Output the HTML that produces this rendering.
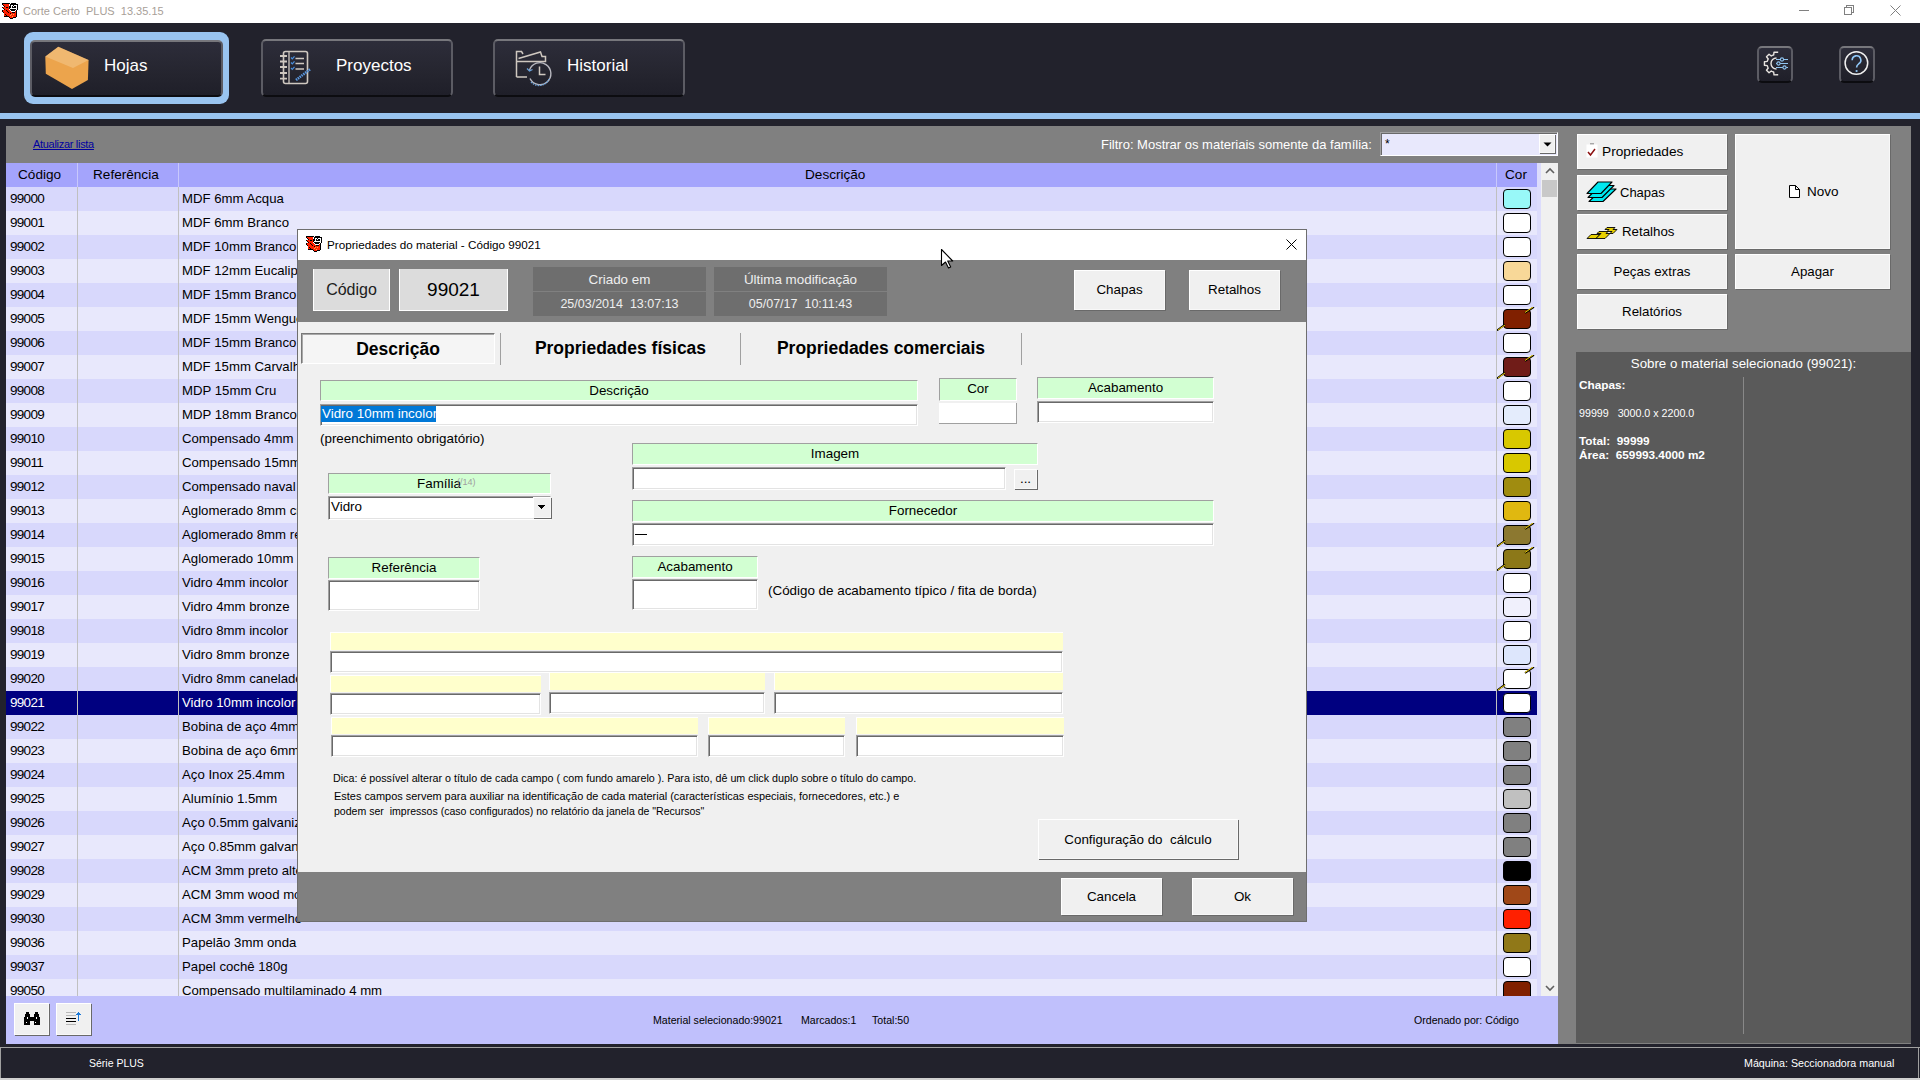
<!DOCTYPE html>
<html><head><meta charset="utf-8"><title>Corte Certo PLUS</title>
<style>
*{margin:0;padding:0;box-sizing:border-box}
html,body{width:1920px;height:1080px;overflow:hidden;background:#22222c;font-family:"Liberation Sans", sans-serif;}
div{position:absolute}
.t{white-space:pre;color:#000}
.btn{background:#f0f0f0;border-top:1px solid #fff;border-left:1px solid #fff;border-right:1px solid #f8f8f8;border-bottom:1px solid #f8f8f8;box-shadow:1px 1px 0 #696969,inset 1px 1px 0 #f0f0f0}
.hb{background:linear-gradient(#2d2d3a,#25252f 60%,#1f1f29);border-top:2px solid #77777c;border-left:2px solid #5c5c64;border-right:2px solid #5c5c64;border-bottom:2px solid #0c0c10;border-radius:5px}
.gl{background:#d2ffd2;border-top:1px solid #a0a0a0;border-left:1px solid #a0a0a0;border-bottom:1px solid #fff;border-right:1px solid #fff}
.yl{background:#ffffcc;border-top:1px solid #fff;border-left:1px solid #fff}
.inp{background:#fff;border-top:1px solid #a0a0a0;border-left:1px solid #a0a0a0;border-right:1px solid #fff;border-bottom:1px solid #fff;box-shadow:inset 1px 1px 0 #696969,inset -1px -1px 0 #e3e3e3}
</style></head>
<body>
<div style="left:0px;top:0px;width:1920px;height:23px;background:#fff"></div><div class="t" style="left:23px;top:0px;height:23px;line-height:23px;font-size:11px;color:#a8a098">Corte Certo  PLUS  13.35.15</div><div style="left:1799px;top:10px;width:10px;height:1px;background:#808080"></div><div style="left:1846px;top:5px;width:8px;height:8px;border:1px solid #808080"></div><div style="left:1844px;top:7px;width:8px;height:8px;border:1px solid #808080;background:#fff"></div><svg style="position:absolute;left:1890px;top:5px" width="11" height="11"><path d="M0.5 0.5L10.5 10.5M10.5 0.5L0.5 10.5" stroke="#808080" stroke-width="1"/></svg><div style="left:0px;top:23px;width:1920px;height:90px;background:#22222c"></div><div style="left:0px;top:113px;width:1920px;height:6px;background:#99c4f0"></div><div style="left:0px;top:119px;width:1920px;height:7px;background:#22222c"></div><div style="left:24px;top:32px;width:205px;height:72px;background:#99c4f0;border-radius:9px"></div><div class="hb" style="left:30px;top:40px;width:193px;height:57px;"></div><div class="t" style="left:104px;top:54px;height:24px;line-height:24px;font-size:17px;color:#fff">Hojas</div><div class="hb" style="left:261px;top:39px;width:192px;height:58px;"></div><div class="t" style="left:336px;top:54px;height:24px;line-height:24px;font-size:17px;color:#fff">Proyectos</div><div class="hb" style="left:493px;top:39px;width:192px;height:58px;"></div><div class="t" style="left:567px;top:54px;height:24px;line-height:24px;font-size:17px;color:#fff">Historial</div><div class="hb" style="left:1757px;top:46px;width:36px;height:37px;"></div><div class="hb" style="left:1839px;top:46px;width:36px;height:37px;"></div><div style="left:6px;top:126px;width:1552px;height:918px;background:#808080"></div><div class="t" style="left:33px;top:136px;height:16px;line-height:16px;font-size:11px;letter-spacing:-0.3px;color:#0000a0;text-decoration:underline">Atualizar lista</div><div class="t" style="left:1101px;top:137px;height:16px;line-height:16px;font-size:13px;color:#fff">Filtro: Mostrar os materiais somente da família:</div><div style="left:1380px;top:132px;width:178px;height:24px;background:#e8e8fc;border-top:1px solid #a0a0a0;border-left:1px solid #a0a0a0;border-bottom:1px solid #fff;border-right:1px solid #fff;box-shadow:inset 1px 1px 0 #696969"></div><div class="t" style="left:1385px;top:137px;height:14px;line-height:14px;font-size:12px">*</div><div class="btn" style="left:1539px;top:134px;width:16px;height:19px;"></div><div style="left:6px;top:163px;width:1531px;height:24px;background:#a4a4fc"></div><div style="left:77px;top:163px;width:1px;height:24px;background:#c8c8fc"></div><div style="left:178px;top:163px;width:1px;height:24px;background:#c8c8fc"></div><div style="left:1496px;top:163px;width:1px;height:24px;background:#c8c8fc"></div><div class="t" style="left:18px;top:163px;height:24px;line-height:24px;font-size:13.6px">Código</div><div class="t" style="left:93px;top:163px;height:24px;line-height:24px;font-size:13.6px">Referência</div><div class="t" style="left:805px;top:163px;height:24px;line-height:24px;font-size:13.6px">Descrição</div><div class="t" style="left:1505px;top:163px;height:24px;line-height:24px;font-size:13.6px">Cor</div><div style="left:6px;top:187px;width:1531px;height:809px;overflow:hidden"><div style="left:0px;top:0px;width:1531px;height:24px;background:#d8d8fc"></div><div class="t" style="left:4px;top:0px;height:24px;line-height:24px;font-size:13.5px;letter-spacing:-0.7px;color:#000">99000</div><div class="t" style="left:176px;top:0px;height:24px;line-height:24px;font-size:13.2px;color:#000">MDF 6mm Acqua</div><div style="left:1497px;top:2px;width:28px;height:20px;background:#98f8f8;border:1.5px solid #000;border-radius:4px"></div><div style="left:0px;top:24px;width:1531px;height:24px;background:#e8e8fc"></div><div class="t" style="left:4px;top:24px;height:24px;line-height:24px;font-size:13.5px;letter-spacing:-0.7px;color:#000">99001</div><div class="t" style="left:176px;top:24px;height:24px;line-height:24px;font-size:13.2px;color:#000">MDF 6mm Branco</div><div style="left:1497px;top:26px;width:28px;height:20px;background:#fff;border:1.5px solid #000;border-radius:4px"></div><div style="left:0px;top:48px;width:1531px;height:24px;background:#d8d8fc"></div><div class="t" style="left:4px;top:48px;height:24px;line-height:24px;font-size:13.5px;letter-spacing:-0.7px;color:#000">99002</div><div class="t" style="left:176px;top:48px;height:24px;line-height:24px;font-size:13.2px;color:#000">MDF 10mm Branco</div><div style="left:1497px;top:50px;width:28px;height:20px;background:#fff;border:1.5px solid #000;border-radius:4px"></div><div style="left:0px;top:72px;width:1531px;height:24px;background:#e8e8fc"></div><div class="t" style="left:4px;top:72px;height:24px;line-height:24px;font-size:13.5px;letter-spacing:-0.7px;color:#000">99003</div><div class="t" style="left:176px;top:72px;height:24px;line-height:24px;font-size:13.2px;color:#000">MDF 12mm Eucalipto</div><div style="left:1497px;top:74px;width:28px;height:20px;background:#f8d898;border:1.5px solid #000;border-radius:4px"></div><div style="left:0px;top:96px;width:1531px;height:24px;background:#d8d8fc"></div><div class="t" style="left:4px;top:96px;height:24px;line-height:24px;font-size:13.5px;letter-spacing:-0.7px;color:#000">99004</div><div class="t" style="left:176px;top:96px;height:24px;line-height:24px;font-size:13.2px;color:#000">MDF 15mm Branco</div><div style="left:1497px;top:98px;width:28px;height:20px;background:#fff;border:1.5px solid #000;border-radius:4px"></div><div style="left:0px;top:120px;width:1531px;height:24px;background:#e8e8fc"></div><div class="t" style="left:4px;top:120px;height:24px;line-height:24px;font-size:13.5px;letter-spacing:-0.7px;color:#000">99005</div><div class="t" style="left:176px;top:120px;height:24px;line-height:24px;font-size:13.2px;color:#000">MDF 15mm Wengue</div><div style="left:1497px;top:122px;width:28px;height:20px;background:#802000;border:1.5px solid #000;border-radius:4px"></div><svg style="position:absolute;left:1490px;top:120px" width="41" height="24"><path d="M1 23.5l8-6M29 6l9-6" stroke="#000" stroke-width="1.6"/><path d="M2 23l7-5M29 5.5l8-5.5" stroke="#f0d000" stroke-width="1"/></svg><div style="left:0px;top:144px;width:1531px;height:24px;background:#d8d8fc"></div><div class="t" style="left:4px;top:144px;height:24px;line-height:24px;font-size:13.5px;letter-spacing:-0.7px;color:#000">99006</div><div class="t" style="left:176px;top:144px;height:24px;line-height:24px;font-size:13.2px;color:#000">MDF 15mm Branco</div><div style="left:1497px;top:146px;width:28px;height:20px;background:#fff;border:1.5px solid #000;border-radius:4px"></div><div style="left:0px;top:168px;width:1531px;height:24px;background:#e8e8fc"></div><div class="t" style="left:4px;top:168px;height:24px;line-height:24px;font-size:13.5px;letter-spacing:-0.7px;color:#000">99007</div><div class="t" style="left:176px;top:168px;height:24px;line-height:24px;font-size:13.2px;color:#000">MDF 15mm Carvalho</div><div style="left:1497px;top:170px;width:28px;height:20px;background:#701c18;border:1.5px solid #000;border-radius:4px"></div><svg style="position:absolute;left:1490px;top:168px" width="41" height="24"><path d="M1 23.5l8-6M29 6l9-6" stroke="#000" stroke-width="1.6"/><path d="M2 23l7-5M29 5.5l8-5.5" stroke="#f0d000" stroke-width="1"/></svg><div style="left:0px;top:192px;width:1531px;height:24px;background:#d8d8fc"></div><div class="t" style="left:4px;top:192px;height:24px;line-height:24px;font-size:13.5px;letter-spacing:-0.7px;color:#000">99008</div><div class="t" style="left:176px;top:192px;height:24px;line-height:24px;font-size:13.2px;color:#000">MDP 15mm Cru</div><div style="left:1497px;top:194px;width:28px;height:20px;background:#fff;border:1.5px solid #000;border-radius:4px"></div><div style="left:0px;top:216px;width:1531px;height:24px;background:#e8e8fc"></div><div class="t" style="left:4px;top:216px;height:24px;line-height:24px;font-size:13.5px;letter-spacing:-0.7px;color:#000">99009</div><div class="t" style="left:176px;top:216px;height:24px;line-height:24px;font-size:13.2px;color:#000">MDP 18mm Branco</div><div style="left:1497px;top:218px;width:28px;height:20px;background:#e4ecfc;border:1.5px solid #000;border-radius:4px"></div><div style="left:0px;top:240px;width:1531px;height:24px;background:#d8d8fc"></div><div class="t" style="left:4px;top:240px;height:24px;line-height:24px;font-size:13.5px;letter-spacing:-0.7px;color:#000">99010</div><div class="t" style="left:176px;top:240px;height:24px;line-height:24px;font-size:13.2px;color:#000">Compensado 4mm</div><div style="left:1497px;top:242px;width:28px;height:20px;background:#d8c800;border:1.5px solid #000;border-radius:4px"></div><div style="left:0px;top:264px;width:1531px;height:24px;background:#e8e8fc"></div><div class="t" style="left:4px;top:264px;height:24px;line-height:24px;font-size:13.5px;letter-spacing:-0.7px;color:#000">99011</div><div class="t" style="left:176px;top:264px;height:24px;line-height:24px;font-size:13.2px;color:#000">Compensado 15mm</div><div style="left:1497px;top:266px;width:28px;height:20px;background:#d8c800;border:1.5px solid #000;border-radius:4px"></div><div style="left:0px;top:288px;width:1531px;height:24px;background:#d8d8fc"></div><div class="t" style="left:4px;top:288px;height:24px;line-height:24px;font-size:13.5px;letter-spacing:-0.7px;color:#000">99012</div><div class="t" style="left:176px;top:288px;height:24px;line-height:24px;font-size:13.2px;color:#000">Compensado naval</div><div style="left:1497px;top:290px;width:28px;height:20px;background:#a08c10;border:1.5px solid #000;border-radius:4px"></div><div style="left:0px;top:312px;width:1531px;height:24px;background:#e8e8fc"></div><div class="t" style="left:4px;top:312px;height:24px;line-height:24px;font-size:13.5px;letter-spacing:-0.7px;color:#000">99013</div><div class="t" style="left:176px;top:312px;height:24px;line-height:24px;font-size:13.2px;color:#000">Aglomerado 8mm cru</div><div style="left:1497px;top:314px;width:28px;height:20px;background:#e0b810;border:1.5px solid #000;border-radius:4px"></div><div style="left:0px;top:336px;width:1531px;height:24px;background:#d8d8fc"></div><div class="t" style="left:4px;top:336px;height:24px;line-height:24px;font-size:13.5px;letter-spacing:-0.7px;color:#000">99014</div><div class="t" style="left:176px;top:336px;height:24px;line-height:24px;font-size:13.2px;color:#000">Aglomerado 8mm revestido</div><div style="left:1497px;top:338px;width:28px;height:20px;background:#8c7830;border:1.5px solid #000;border-radius:4px"></div><svg style="position:absolute;left:1490px;top:336px" width="41" height="24"><path d="M1 23.5l8-6M29 6l9-6" stroke="#000" stroke-width="1.6"/><path d="M2 23l7-5M29 5.5l8-5.5" stroke="#f0d000" stroke-width="1"/></svg><div style="left:0px;top:360px;width:1531px;height:24px;background:#e8e8fc"></div><div class="t" style="left:4px;top:360px;height:24px;line-height:24px;font-size:13.5px;letter-spacing:-0.7px;color:#000">99015</div><div class="t" style="left:176px;top:360px;height:24px;line-height:24px;font-size:13.2px;color:#000">Aglomerado 10mm</div><div style="left:1497px;top:362px;width:28px;height:20px;background:#8c7818;border:1.5px solid #000;border-radius:4px"></div><svg style="position:absolute;left:1490px;top:360px" width="41" height="24"><path d="M1 23.5l8-6M29 6l9-6" stroke="#000" stroke-width="1.6"/><path d="M2 23l7-5M29 5.5l8-5.5" stroke="#f0d000" stroke-width="1"/></svg><div style="left:0px;top:384px;width:1531px;height:24px;background:#d8d8fc"></div><div class="t" style="left:4px;top:384px;height:24px;line-height:24px;font-size:13.5px;letter-spacing:-0.7px;color:#000">99016</div><div class="t" style="left:176px;top:384px;height:24px;line-height:24px;font-size:13.2px;color:#000">Vidro 4mm incolor</div><div style="left:1497px;top:386px;width:28px;height:20px;background:#fff;border:1.5px solid #000;border-radius:4px"></div><div style="left:0px;top:408px;width:1531px;height:24px;background:#e8e8fc"></div><div class="t" style="left:4px;top:408px;height:24px;line-height:24px;font-size:13.5px;letter-spacing:-0.7px;color:#000">99017</div><div class="t" style="left:176px;top:408px;height:24px;line-height:24px;font-size:13.2px;color:#000">Vidro 4mm bronze</div><div style="left:1497px;top:410px;width:28px;height:20px;background:#f0f0fc;border:1.5px solid #000;border-radius:4px"></div><div style="left:0px;top:432px;width:1531px;height:24px;background:#d8d8fc"></div><div class="t" style="left:4px;top:432px;height:24px;line-height:24px;font-size:13.5px;letter-spacing:-0.7px;color:#000">99018</div><div class="t" style="left:176px;top:432px;height:24px;line-height:24px;font-size:13.2px;color:#000">Vidro 8mm incolor</div><div style="left:1497px;top:434px;width:28px;height:20px;background:#fff;border:1.5px solid #000;border-radius:4px"></div><div style="left:0px;top:456px;width:1531px;height:24px;background:#e8e8fc"></div><div class="t" style="left:4px;top:456px;height:24px;line-height:24px;font-size:13.5px;letter-spacing:-0.7px;color:#000">99019</div><div class="t" style="left:176px;top:456px;height:24px;line-height:24px;font-size:13.2px;color:#000">Vidro 8mm bronze</div><div style="left:1497px;top:458px;width:28px;height:20px;background:#dde6fc;border:1.5px solid #000;border-radius:4px"></div><div style="left:0px;top:480px;width:1531px;height:24px;background:#d8d8fc"></div><div class="t" style="left:4px;top:480px;height:24px;line-height:24px;font-size:13.5px;letter-spacing:-0.7px;color:#000">99020</div><div class="t" style="left:176px;top:480px;height:24px;line-height:24px;font-size:13.2px;color:#000">Vidro 8mm canelado</div><div style="left:1497px;top:482px;width:28px;height:20px;background:#fff;border:1.5px solid #000;border-radius:4px"></div><svg style="position:absolute;left:1490px;top:480px" width="41" height="24"><path d="M1 23.5l8-6M29 6l9-6" stroke="#000" stroke-width="1.6"/><path d="M2 23l7-5M29 5.5l8-5.5" stroke="#f0d000" stroke-width="1"/></svg><div style="left:0px;top:504px;width:1531px;height:24px;background:#000080"></div><div class="t" style="left:4px;top:504px;height:24px;line-height:24px;font-size:13.5px;letter-spacing:-0.7px;color:#fff">99021</div><div class="t" style="left:176px;top:504px;height:24px;line-height:24px;font-size:13.2px;color:#fff">Vidro 10mm incolor</div><div style="left:1497px;top:506px;width:28px;height:20px;background:#fff;border:1.5px solid #000;border-radius:4px"></div><div style="left:0px;top:528px;width:1531px;height:24px;background:#d8d8fc"></div><div class="t" style="left:4px;top:528px;height:24px;line-height:24px;font-size:13.5px;letter-spacing:-0.7px;color:#000">99022</div><div class="t" style="left:176px;top:528px;height:24px;line-height:24px;font-size:13.2px;color:#000">Bobina de aço 4mm</div><div style="left:1497px;top:530px;width:28px;height:20px;background:#808080;border:1.5px solid #000;border-radius:4px"></div><div style="left:0px;top:552px;width:1531px;height:24px;background:#e8e8fc"></div><div class="t" style="left:4px;top:552px;height:24px;line-height:24px;font-size:13.5px;letter-spacing:-0.7px;color:#000">99023</div><div class="t" style="left:176px;top:552px;height:24px;line-height:24px;font-size:13.2px;color:#000">Bobina de aço 6mm</div><div style="left:1497px;top:554px;width:28px;height:20px;background:#808080;border:1.5px solid #000;border-radius:4px"></div><div style="left:0px;top:576px;width:1531px;height:24px;background:#d8d8fc"></div><div class="t" style="left:4px;top:576px;height:24px;line-height:24px;font-size:13.5px;letter-spacing:-0.7px;color:#000">99024</div><div class="t" style="left:176px;top:576px;height:24px;line-height:24px;font-size:13.2px;color:#000">Aço Inox 25.4mm</div><div style="left:1497px;top:578px;width:28px;height:20px;background:#808080;border:1.5px solid #000;border-radius:4px"></div><div style="left:0px;top:600px;width:1531px;height:24px;background:#e8e8fc"></div><div class="t" style="left:4px;top:600px;height:24px;line-height:24px;font-size:13.5px;letter-spacing:-0.7px;color:#000">99025</div><div class="t" style="left:176px;top:600px;height:24px;line-height:24px;font-size:13.2px;color:#000">Alumínio 1.5mm</div><div style="left:1497px;top:602px;width:28px;height:20px;background:#c0c0c0;border:1.5px solid #000;border-radius:4px"></div><div style="left:0px;top:624px;width:1531px;height:24px;background:#d8d8fc"></div><div class="t" style="left:4px;top:624px;height:24px;line-height:24px;font-size:13.5px;letter-spacing:-0.7px;color:#000">99026</div><div class="t" style="left:176px;top:624px;height:24px;line-height:24px;font-size:13.2px;color:#000">Aço 0.5mm galvanizado</div><div style="left:1497px;top:626px;width:28px;height:20px;background:#808080;border:1.5px solid #000;border-radius:4px"></div><div style="left:0px;top:648px;width:1531px;height:24px;background:#e8e8fc"></div><div class="t" style="left:4px;top:648px;height:24px;line-height:24px;font-size:13.5px;letter-spacing:-0.7px;color:#000">99027</div><div class="t" style="left:176px;top:648px;height:24px;line-height:24px;font-size:13.2px;color:#000">Aço 0.85mm galvanizado</div><div style="left:1497px;top:650px;width:28px;height:20px;background:#808080;border:1.5px solid #000;border-radius:4px"></div><div style="left:0px;top:672px;width:1531px;height:24px;background:#d8d8fc"></div><div class="t" style="left:4px;top:672px;height:24px;line-height:24px;font-size:13.5px;letter-spacing:-0.7px;color:#000">99028</div><div class="t" style="left:176px;top:672px;height:24px;line-height:24px;font-size:13.2px;color:#000">ACM 3mm preto alto brilho</div><div style="left:1497px;top:674px;width:28px;height:20px;background:#000;border:1.5px solid #000;border-radius:4px"></div><div style="left:0px;top:696px;width:1531px;height:24px;background:#e8e8fc"></div><div class="t" style="left:4px;top:696px;height:24px;line-height:24px;font-size:13.5px;letter-spacing:-0.7px;color:#000">99029</div><div class="t" style="left:176px;top:696px;height:24px;line-height:24px;font-size:13.2px;color:#000">ACM 3mm wood mogno</div><div style="left:1497px;top:698px;width:28px;height:20px;background:#a04818;border:1.5px solid #000;border-radius:4px"></div><div style="left:0px;top:720px;width:1531px;height:24px;background:#d8d8fc"></div><div class="t" style="left:4px;top:720px;height:24px;line-height:24px;font-size:13.5px;letter-spacing:-0.7px;color:#000">99030</div><div class="t" style="left:176px;top:720px;height:24px;line-height:24px;font-size:13.2px;color:#000">ACM 3mm vermelho</div><div style="left:1497px;top:722px;width:28px;height:20px;background:#ff2000;border:1.5px solid #000;border-radius:4px"></div><div style="left:0px;top:744px;width:1531px;height:24px;background:#e8e8fc"></div><div class="t" style="left:4px;top:744px;height:24px;line-height:24px;font-size:13.5px;letter-spacing:-0.7px;color:#000">99036</div><div class="t" style="left:176px;top:744px;height:24px;line-height:24px;font-size:13.2px;color:#000">Papelão 3mm onda</div><div style="left:1497px;top:746px;width:28px;height:20px;background:#907818;border:1.5px solid #000;border-radius:4px"></div><div style="left:0px;top:768px;width:1531px;height:24px;background:#d8d8fc"></div><div class="t" style="left:4px;top:768px;height:24px;line-height:24px;font-size:13.5px;letter-spacing:-0.7px;color:#000">99037</div><div class="t" style="left:176px;top:768px;height:24px;line-height:24px;font-size:13.2px;color:#000">Papel cochê 180g</div><div style="left:1497px;top:770px;width:28px;height:20px;background:#fff;border:1.5px solid #000;border-radius:4px"></div><div style="left:0px;top:792px;width:1531px;height:24px;background:#e8e8fc"></div><div class="t" style="left:4px;top:792px;height:24px;line-height:24px;font-size:13.5px;letter-spacing:-0.7px;color:#000">99050</div><div class="t" style="left:176px;top:792px;height:24px;line-height:24px;font-size:13.2px;color:#000">Compensado multilaminado 4 mm</div><div style="left:1497px;top:794px;width:28px;height:20px;background:#802000;border:1.5px solid #000;border-radius:4px"></div><div style="left:71px;top:0px;width:1px;height:809px;background:#c0c0c0"></div><div style="left:172px;top:0px;width:1px;height:809px;background:#c0c0c0"></div><div style="left:1490px;top:0px;width:1px;height:809px;background:#c0c0c0"></div></div><div style="left:1537px;top:163px;width:4px;height:833px;background:#dcdcfc"></div><div style="left:1541px;top:163px;width:17px;height:833px;background:#f0f0f0"></div><div style="left:1542px;top:180px;width:15px;height:17px;background:#c8c8c8"></div><div style="left:6px;top:996px;width:1552px;height:48px;background:#c0c0fc"></div><div class="btn" style="left:14px;top:1003px;width:35px;height:32px;"></div><div class="btn" style="left:56px;top:1003px;width:35px;height:32px;"></div><div class="t" style="left:653px;top:1012px;height:16px;line-height:16px;font-size:10.6px">Material selecionado:99021</div><div class="t" style="left:801px;top:1012px;height:16px;line-height:16px;font-size:10.6px">Marcados:1</div><div class="t" style="left:872px;top:1012px;height:16px;line-height:16px;font-size:10.6px">Total:50</div><div class="t" style="left:1414px;top:1012px;height:16px;line-height:16px;font-size:10.6px">Ordenado por: Código</div><div style="left:1558px;top:126px;width:353px;height:918px;background:#808080"></div><div class="btn" style="left:1577px;top:134px;width:150px;height:35px;"></div><div class="t" style="left:1602px;top:134px;height:35px;line-height:35px;font-size:13.7px">Propriedades</div><div class="btn" style="left:1577px;top:175px;width:150px;height:35px;"></div><div class="t" style="left:1620px;top:175px;height:35px;line-height:35px;font-size:13px">Chapas</div><div class="btn" style="left:1577px;top:214px;width:150px;height:35px;"></div><div class="t" style="left:1622px;top:214px;height:35px;line-height:35px;font-size:13.3px">Retalhos</div><div class="btn" style="left:1735px;top:134px;width:155px;height:115px;"></div><div class="t" style="left:1807px;top:134px;height:115px;line-height:115px;font-size:13.5px">Novo</div><svg style="position:absolute;left:1788px;top:184px" width="13" height="15"><path d="M1.5 1.5h6l4 4v8h-10z M7.5 1.5v4h4" fill="#fff" stroke="#000" stroke-width="1"/></svg><div class="btn" style="left:1577px;top:254px;width:150px;height:35px;"></div><div class="t" style="left:1577px;top:254px;width:150px;height:35px;line-height:35px;font-size:13.3px;text-align:center">Peças extras</div><div class="btn" style="left:1735px;top:254px;width:155px;height:35px;"></div><div class="t" style="left:1735px;top:254px;width:155px;height:35px;line-height:35px;font-size:13.3px;text-align:center">Apagar</div><div class="btn" style="left:1577px;top:294px;width:150px;height:35px;"></div><div class="t" style="left:1577px;top:294px;width:150px;height:35px;line-height:35px;font-size:13.3px;text-align:center">Relatórios</div><div style="left:1576px;top:352px;width:335px;height:691px;background:#5a5a5a"></div><div class="t" style="left:1576px;top:355px;width:335px;height:18px;line-height:18px;font-size:13.3px;color:#fff;text-align:center">Sobre o material selecionado (99021):</div><div style="left:1743px;top:377px;width:1px;height:657px;background:#888"></div><div class="t" style="left:1579px;top:378px;height:14px;line-height:14px;font-size:11.8px;font-weight:bold;color:#fff">Chapas:</div><div class="t" style="left:1579px;top:406px;height:14px;line-height:14px;font-size:10.7px;color:#fff">99999   3000.0 x 2200.0</div><div class="t" style="left:1579px;top:434px;height:14px;line-height:14px;font-size:11.8px;font-weight:bold;color:#fff">Total:  99999</div><div class="t" style="left:1579px;top:448px;height:14px;line-height:14px;font-size:11.8px;font-weight:bold;color:#fff">Área:  659993.4000 m2</div><div style="left:0px;top:1044px;width:1920px;height:36px;background:#22222c"></div><div style="left:0px;top:1047px;width:1920px;height:1px;background:#a0a0a0"></div><div style="left:0px;top:1078px;width:1920px;height:2px;background:#d0d0d0"></div><div style="left:0px;top:1047px;width:1px;height:31px;background:#a0a0a0"></div><div style="left:1918px;top:1047px;width:1px;height:31px;background:#a0a0a0"></div><div class="t" style="left:89px;top:1055px;height:16px;line-height:16px;font-size:10.5px;color:#fff">Série PLUS</div><div class="t" style="left:1744px;top:1055px;height:16px;line-height:16px;font-size:10.7px;color:#fff">Máquina: Seccionadora manual</div><div style="left:297px;top:229px;width:1010px;height:693px;background:#f0f0f0;border:1px solid #6e6e6e"></div><div style="left:298px;top:230px;width:1008px;height:30px;background:#fff"></div><div class="t" style="left:327px;top:230px;height:30px;line-height:30px;font-size:11.7px">Propriedades do material - Código 99021</div><svg style="position:absolute;left:1286px;top:239px" width="11" height="11"><path d="M0.5 0.5L10.5 10.5M10.5 0.5L0.5 10.5" stroke="#000" stroke-width="1"/></svg><div style="left:298px;top:260px;width:1008px;height:62px;background:#808080"></div><div style="left:313px;top:269px;width:77px;height:42px;background:#dcdcdc;border:1px solid #fff;border-top:none"></div><div class="t" style="left:313px;top:269px;width:77px;height:42px;line-height:42px;font-size:16px;color:#202020;text-align:center">Código</div><div style="left:399px;top:269px;width:109px;height:42px;background:#dcdcdc;border:1px solid #fff;border-top:none"></div><div class="t" style="left:399px;top:269px;width:109px;height:42px;line-height:42px;font-size:19px;color:#000;text-align:center">99021</div><div style="left:533px;top:267px;width:173px;height:24px;background:#6e6e6e"></div><div style="left:533px;top:292px;width:173px;height:24px;background:#6e6e6e"></div><div class="t" style="left:533px;top:268px;width:173px;height:24px;line-height:24px;font-size:13.4px;color:#eee;text-align:center">Criado em</div><div class="t" style="left:533px;top:292px;width:173px;height:24px;line-height:24px;font-size:12.5px;color:#eee;text-align:center">25/03/2014  13:07:13</div><div style="left:714px;top:267px;width:173px;height:24px;background:#6e6e6e"></div><div style="left:714px;top:292px;width:173px;height:24px;background:#6e6e6e"></div><div class="t" style="left:714px;top:268px;width:173px;height:24px;line-height:24px;font-size:13.4px;color:#eee;text-align:center">Última modificação</div><div class="t" style="left:714px;top:292px;width:173px;height:24px;line-height:24px;font-size:12.5px;color:#eee;text-align:center">05/07/17  10:11:43</div><div class="btn" style="left:1074px;top:270px;width:91px;height:40px;"></div><div class="t" style="left:1074px;top:270px;width:91px;height:40px;line-height:40px;font-size:13.4px;text-align:center">Chapas</div><div class="btn" style="left:1189px;top:270px;width:91px;height:40px;"></div><div class="t" style="left:1189px;top:270px;width:91px;height:40px;line-height:40px;font-size:13.4px;text-align:center">Retalhos</div><div style="left:301px;top:333px;width:194px;height:31px;background:#f5f5f5;border-top:1px solid #787878;border-left:1px solid #787878;border-right:1px solid #fff;border-bottom:1px solid #fff;box-shadow:inset 1px 1px 0 #a8a8a8"></div><div class="t" style="left:301px;top:333px;width:194px;height:32px;line-height:32px;font-size:17.5px;font-weight:bold;text-align:center">Descrição</div><div style="left:500px;top:333px;width:1px;height:32px;background:#a0a0a0"></div><div class="t" style="left:501px;top:333px;width:239px;height:30px;line-height:30px;font-size:17.5px;font-weight:bold;text-align:center">Propriedades físicas</div><div style="left:740px;top:333px;width:1px;height:32px;background:#a0a0a0"></div><div class="t" style="left:741px;top:333px;width:280px;height:30px;line-height:30px;font-size:17.5px;font-weight:bold;text-align:center">Propriedades comerciais</div><div style="left:1021px;top:333px;width:1px;height:32px;background:#a0a0a0"></div><div class="gl" style="left:320px;top:380px;width:598px;height:21px;"></div><div class="t" style="left:320px;top:380px;width:598px;height:21px;line-height:21px;font-size:13.4px;text-align:center">Descrição</div><div class="inp" style="left:320px;top:404px;width:598px;height:22px;"></div><div style="left:321px;top:406px;width:115px;height:16px;background:#0078d7"></div><div class="t" style="left:322px;top:406px;height:16px;line-height:16px;font-size:13.4px;color:#fff">Vidro 10mm incolor</div><div class="t" style="left:320px;top:431px;height:16px;line-height:16px;font-size:13.4px">(preenchimento obrigatório)</div><div class="gl" style="left:939px;top:378px;width:78px;height:23px;"></div><div class="t" style="left:939px;top:378px;width:78px;height:22px;line-height:22px;font-size:13.4px;text-align:center">Cor</div><div style="left:939px;top:403px;width:78px;height:21px;background:#fff;border-right:1px solid #a0a0a0;border-bottom:1px solid #a0a0a0"></div><div class="gl" style="left:1037px;top:377px;width:177px;height:22px;"></div><div class="t" style="left:1037px;top:377px;width:177px;height:22px;line-height:22px;font-size:13.4px;text-align:center">Acabamento</div><div class="inp" style="left:1037px;top:401px;width:177px;height:22px;"></div><div class="gl" style="left:632px;top:443px;width:406px;height:22px;"></div><div class="t" style="left:632px;top:443px;width:406px;height:22px;line-height:22px;font-size:13.4px;text-align:center">Imagem</div><div class="inp" style="left:632px;top:467px;width:374px;height:23px;"></div><div class="btn" style="left:1014px;top:469px;width:23px;height:20px;"></div><div class="t" style="left:1014px;top:469px;width:23px;height:20px;line-height:20px;font-size:13.4px;text-align:center">...</div><div class="gl" style="left:328px;top:473px;width:223px;height:21px;"></div><div class="t" style="left:417px;top:473px;height:21px;line-height:21px;font-size:13.4px">Família</div><div class="t" style="left:457px;top:476px;height:12px;line-height:12px;font-size:9px;color:#a0a0a0">(/14)</div><div class="inp" style="left:328px;top:496px;width:223px;height:24px;"></div><div class="t" style="left:331px;top:496px;height:22px;line-height:22px;font-size:13.4px">Vidro</div><div class="btn" style="left:533px;top:497px;width:18px;height:21px;"></div><div class="gl" style="left:632px;top:500px;width:582px;height:22px;"></div><div class="t" style="left:632px;top:500px;width:582px;height:22px;line-height:22px;font-size:13.4px;text-align:center">Fornecedor</div><div class="inp" style="left:632px;top:523px;width:582px;height:23px;"></div><div style="left:635px;top:534px;width:12px;height:1px;background:#000"></div><div class="gl" style="left:328px;top:557px;width:152px;height:22px;"></div><div class="t" style="left:328px;top:557px;width:152px;height:22px;line-height:22px;font-size:13.4px;text-align:center">Referência</div><div class="inp" style="left:328px;top:580px;width:152px;height:31px;"></div><div class="gl" style="left:632px;top:556px;width:126px;height:22px;"></div><div class="t" style="left:632px;top:556px;width:126px;height:22px;line-height:22px;font-size:13.4px;text-align:center">Acabamento</div><div class="inp" style="left:632px;top:579px;width:126px;height:31px;"></div><div class="t" style="left:768px;top:583px;height:16px;line-height:16px;font-size:13.4px">(Código de acabamento típico / fita de borda)</div><div class="yl" style="left:330px;top:632px;width:733px;height:18px;"></div><div class="inp" style="left:330px;top:651px;width:733px;height:22px;"></div><div class="yl" style="left:330px;top:675px;width:211px;height:17px;"></div><div class="inp" style="left:330px;top:693px;width:211px;height:22px;"></div><div class="yl" style="left:549px;top:672px;width:216px;height:18px;"></div><div class="inp" style="left:549px;top:692px;width:216px;height:22px;"></div><div class="yl" style="left:774px;top:672px;width:289px;height:18px;"></div><div class="inp" style="left:774px;top:692px;width:289px;height:22px;"></div><div class="yl" style="left:331px;top:717px;width:367px;height:17px;"></div><div class="inp" style="left:331px;top:735px;width:367px;height:22px;"></div><div class="yl" style="left:708px;top:717px;width:137px;height:17px;"></div><div class="inp" style="left:708px;top:735px;width:137px;height:22px;"></div><div class="yl" style="left:856px;top:717px;width:208px;height:17px;"></div><div class="inp" style="left:856px;top:735px;width:208px;height:22px;"></div><div class="t" style="left:333px;top:771px;height:14px;line-height:14px;font-size:10.72px">Dica: é possível alterar o título de cada campo ( com fundo amarelo ). Para isto, dê um click duplo sobre o título do campo.</div><div class="t" style="left:334px;top:789px;height:14px;line-height:14px;font-size:10.95px">Estes campos servem para auxiliar na identificação de cada material (características especiais, fornecedores, etc.) e</div><div class="t" style="left:334px;top:804px;height:14px;line-height:14px;font-size:10.55px">podem ser  impressos (caso configurados) no relatório da janela de "Recursos"</div><div class="btn" style="left:1038px;top:819px;width:200px;height:40px;"></div><div class="t" style="left:1038px;top:820px;width:200px;height:40px;line-height:40px;font-size:13.4px;text-align:center">Configuração do  cálculo</div><div style="left:298px;top:872px;width:1008px;height:49px;background:#808080"></div><div class="btn" style="left:1061px;top:878px;width:101px;height:37px;"></div><div class="t" style="left:1061px;top:878px;width:101px;height:37px;line-height:37px;font-size:13.4px;text-align:center">Cancela</div><div class="btn" style="left:1192px;top:878px;width:101px;height:37px;"></div><div class="t" style="left:1192px;top:878px;width:101px;height:37px;line-height:37px;font-size:13.4px;text-align:center">Ok</div><svg style="position:absolute;left:2px;top:3px;" width="16" height="16" viewBox="0 0 16 16" shape-rendering="crispEdges"><path d="M0 0h1v1h-1zM1 0h1v1h-1zM2 0h1v1h-1zM3 0h1v1h-1zM4 0h1v1h-1zM5 0h1v1h-1zM6 0h1v1h-1zM7 0h1v1h-1zM9 0h1v1h-1zM10 0h1v1h-1zM11 0h1v1h-1zM12 0h1v1h-1zM13 0h1v1h-1zM0 1h1v1h-1zM8 1h1v1h-1zM9 1h1v1h-1zM10 1h1v1h-1zM11 1h1v1h-1zM12 1h1v1h-1zM13 1h1v1h-1zM14 1h1v1h-1zM15 1h1v1h-1zM1 2h1v1h-1zM8 2h1v1h-1zM11 2h1v1h-1zM15 2h1v1h-1zM2 3h1v1h-1zM7 3h1v1h-1zM8 3h1v1h-1zM10 3h1v1h-1zM12 3h1v1h-1zM13 3h1v1h-1zM15 3h1v1h-1zM0 4h1v1h-1zM4 4h1v1h-1zM5 4h1v1h-1zM7 4h1v1h-1zM8 4h1v1h-1zM10 4h1v1h-1zM11 4h1v1h-1zM12 4h1v1h-1zM13 4h1v1h-1zM15 4h1v1h-1zM1 5h1v1h-1zM7 5h1v1h-1zM15 5h1v1h-1zM2 6h1v1h-1zM8 6h1v1h-1zM9 6h1v1h-1zM10 6h1v1h-1zM11 6h1v1h-1zM12 6h1v1h-1zM13 6h1v1h-1zM15 6h1v1h-1zM0 7h1v1h-1zM4 7h1v1h-1zM9 7h1v1h-1zM10 7h1v1h-1zM11 7h1v1h-1zM12 7h1v1h-1zM14 7h1v1h-1zM0 8h1v1h-1zM5 8h1v1h-1zM14 8h1v1h-1zM1 9h1v1h-1zM6 9h1v1h-1zM10 9h1v1h-1zM11 9h1v1h-1zM12 9h1v1h-1zM14 9h1v1h-1zM8 10h1v1h-1zM14 10h1v1h-1zM3 11h1v1h-1zM14 11h1v1h-1zM4 12h1v1h-1zM14 12h1v1h-1zM2 13h1v1h-1zM3 13h1v1h-1zM4 13h1v1h-1zM5 13h1v1h-1zM6 13h1v1h-1zM14 13h1v1h-1zM7 14h1v1h-1zM11 14h1v1h-1zM12 14h1v1h-1zM13 14h1v1h-1zM8 15h1v1h-1zM9 15h1v1h-1zM10 15h1v1h-1z" fill="#000"/><path d="M1 1h1v1h-1zM2 1h1v1h-1zM3 1h1v1h-1zM4 1h1v1h-1zM5 1h1v1h-1zM6 1h1v1h-1zM2 2h1v1h-1zM3 2h1v1h-1zM4 2h1v1h-1zM5 2h1v1h-1zM6 2h1v1h-1zM3 3h1v1h-1zM4 3h1v1h-1zM5 3h1v1h-1zM6 3h1v1h-1zM1 4h1v1h-1zM2 4h1v1h-1zM3 4h1v1h-1zM6 4h1v1h-1zM2 5h1v1h-1zM3 5h1v1h-1zM4 5h1v1h-1zM5 5h1v1h-1zM6 5h1v1h-1zM3 6h1v1h-1zM4 6h1v1h-1zM5 6h1v1h-1zM6 6h1v1h-1zM1 7h1v1h-1zM2 7h1v1h-1zM3 7h1v1h-1zM5 7h1v1h-1zM6 7h1v1h-1zM7 7h1v1h-1zM1 8h1v1h-1zM2 8h1v1h-1zM3 8h1v1h-1zM4 8h1v1h-1zM6 8h1v1h-1zM7 8h1v1h-1zM8 8h1v1h-1zM13 8h1v1h-1zM2 9h1v1h-1zM3 9h1v1h-1zM4 9h1v1h-1zM5 9h1v1h-1zM7 9h1v1h-1zM8 9h1v1h-1zM9 9h1v1h-1zM13 9h1v1h-1zM2 10h1v1h-1zM3 10h1v1h-1zM4 10h1v1h-1zM5 10h1v1h-1zM6 10h1v1h-1zM7 10h1v1h-1zM9 10h1v1h-1zM10 10h1v1h-1zM11 10h1v1h-1zM12 10h1v1h-1zM13 10h1v1h-1zM2 11h1v1h-1zM4 11h1v1h-1zM5 11h1v1h-1zM6 11h1v1h-1zM7 11h1v1h-1zM8 11h1v1h-1zM10 11h1v1h-1zM12 11h1v1h-1zM13 11h1v1h-1zM2 12h1v1h-1zM3 12h1v1h-1zM5 12h1v1h-1zM6 12h1v1h-1zM7 12h1v1h-1zM9 12h1v1h-1zM10 12h1v1h-1zM11 12h1v1h-1zM12 12h1v1h-1zM13 12h1v1h-1zM7 13h1v1h-1zM8 13h1v1h-1zM9 13h1v1h-1zM11 13h1v1h-1zM12 13h1v1h-1zM13 13h1v1h-1zM8 14h1v1h-1zM9 14h1v1h-1zM10 14h1v1h-1z" fill="#ff2000"/><path d="M7 1h1v1h-1zM7 2h1v1h-1zM9 2h1v1h-1zM10 2h1v1h-1zM12 2h1v1h-1zM13 2h1v1h-1zM14 2h1v1h-1zM9 3h1v1h-1zM11 3h1v1h-1zM14 3h1v1h-1zM9 4h1v1h-1zM14 4h1v1h-1zM8 5h1v1h-1zM9 5h1v1h-1zM10 5h1v1h-1zM11 5h1v1h-1zM12 5h1v1h-1zM13 5h1v1h-1zM14 5h1v1h-1zM7 6h1v1h-1zM14 6h1v1h-1zM8 7h1v1h-1zM13 7h1v1h-1zM9 8h1v1h-1zM10 8h1v1h-1zM11 8h1v1h-1zM12 8h1v1h-1z" fill="#fff"/><path d="M9 11h1v1h-1zM11 11h1v1h-1zM8 12h1v1h-1zM10 13h1v1h-1z" fill="#f0b050"/></svg><svg style="position:absolute;left:306px;top:236px;" width="16" height="16" viewBox="0 0 16 16" shape-rendering="crispEdges"><path d="M0 0h1v1h-1zM1 0h1v1h-1zM2 0h1v1h-1zM3 0h1v1h-1zM4 0h1v1h-1zM5 0h1v1h-1zM6 0h1v1h-1zM7 0h1v1h-1zM9 0h1v1h-1zM10 0h1v1h-1zM11 0h1v1h-1zM12 0h1v1h-1zM13 0h1v1h-1zM0 1h1v1h-1zM8 1h1v1h-1zM9 1h1v1h-1zM10 1h1v1h-1zM11 1h1v1h-1zM12 1h1v1h-1zM13 1h1v1h-1zM14 1h1v1h-1zM15 1h1v1h-1zM1 2h1v1h-1zM8 2h1v1h-1zM11 2h1v1h-1zM15 2h1v1h-1zM2 3h1v1h-1zM7 3h1v1h-1zM8 3h1v1h-1zM10 3h1v1h-1zM12 3h1v1h-1zM13 3h1v1h-1zM15 3h1v1h-1zM0 4h1v1h-1zM4 4h1v1h-1zM5 4h1v1h-1zM7 4h1v1h-1zM8 4h1v1h-1zM10 4h1v1h-1zM11 4h1v1h-1zM12 4h1v1h-1zM13 4h1v1h-1zM15 4h1v1h-1zM1 5h1v1h-1zM7 5h1v1h-1zM15 5h1v1h-1zM2 6h1v1h-1zM8 6h1v1h-1zM9 6h1v1h-1zM10 6h1v1h-1zM11 6h1v1h-1zM12 6h1v1h-1zM13 6h1v1h-1zM15 6h1v1h-1zM0 7h1v1h-1zM4 7h1v1h-1zM9 7h1v1h-1zM10 7h1v1h-1zM11 7h1v1h-1zM12 7h1v1h-1zM14 7h1v1h-1zM0 8h1v1h-1zM5 8h1v1h-1zM14 8h1v1h-1zM1 9h1v1h-1zM6 9h1v1h-1zM10 9h1v1h-1zM11 9h1v1h-1zM12 9h1v1h-1zM14 9h1v1h-1zM8 10h1v1h-1zM14 10h1v1h-1zM3 11h1v1h-1zM14 11h1v1h-1zM4 12h1v1h-1zM14 12h1v1h-1zM2 13h1v1h-1zM3 13h1v1h-1zM4 13h1v1h-1zM5 13h1v1h-1zM6 13h1v1h-1zM14 13h1v1h-1zM7 14h1v1h-1zM11 14h1v1h-1zM12 14h1v1h-1zM13 14h1v1h-1zM8 15h1v1h-1zM9 15h1v1h-1zM10 15h1v1h-1z" fill="#000"/><path d="M1 1h1v1h-1zM2 1h1v1h-1zM3 1h1v1h-1zM4 1h1v1h-1zM5 1h1v1h-1zM6 1h1v1h-1zM2 2h1v1h-1zM3 2h1v1h-1zM4 2h1v1h-1zM5 2h1v1h-1zM6 2h1v1h-1zM3 3h1v1h-1zM4 3h1v1h-1zM5 3h1v1h-1zM6 3h1v1h-1zM1 4h1v1h-1zM2 4h1v1h-1zM3 4h1v1h-1zM6 4h1v1h-1zM2 5h1v1h-1zM3 5h1v1h-1zM4 5h1v1h-1zM5 5h1v1h-1zM6 5h1v1h-1zM3 6h1v1h-1zM4 6h1v1h-1zM5 6h1v1h-1zM6 6h1v1h-1zM1 7h1v1h-1zM2 7h1v1h-1zM3 7h1v1h-1zM5 7h1v1h-1zM6 7h1v1h-1zM7 7h1v1h-1zM1 8h1v1h-1zM2 8h1v1h-1zM3 8h1v1h-1zM4 8h1v1h-1zM6 8h1v1h-1zM7 8h1v1h-1zM8 8h1v1h-1zM13 8h1v1h-1zM2 9h1v1h-1zM3 9h1v1h-1zM4 9h1v1h-1zM5 9h1v1h-1zM7 9h1v1h-1zM8 9h1v1h-1zM9 9h1v1h-1zM13 9h1v1h-1zM2 10h1v1h-1zM3 10h1v1h-1zM4 10h1v1h-1zM5 10h1v1h-1zM6 10h1v1h-1zM7 10h1v1h-1zM9 10h1v1h-1zM10 10h1v1h-1zM11 10h1v1h-1zM12 10h1v1h-1zM13 10h1v1h-1zM2 11h1v1h-1zM4 11h1v1h-1zM5 11h1v1h-1zM6 11h1v1h-1zM7 11h1v1h-1zM8 11h1v1h-1zM10 11h1v1h-1zM12 11h1v1h-1zM13 11h1v1h-1zM2 12h1v1h-1zM3 12h1v1h-1zM5 12h1v1h-1zM6 12h1v1h-1zM7 12h1v1h-1zM9 12h1v1h-1zM10 12h1v1h-1zM11 12h1v1h-1zM12 12h1v1h-1zM13 12h1v1h-1zM7 13h1v1h-1zM8 13h1v1h-1zM9 13h1v1h-1zM11 13h1v1h-1zM12 13h1v1h-1zM13 13h1v1h-1zM8 14h1v1h-1zM9 14h1v1h-1zM10 14h1v1h-1z" fill="#ff2000"/><path d="M7 1h1v1h-1zM7 2h1v1h-1zM9 2h1v1h-1zM10 2h1v1h-1zM12 2h1v1h-1zM13 2h1v1h-1zM14 2h1v1h-1zM9 3h1v1h-1zM11 3h1v1h-1zM14 3h1v1h-1zM9 4h1v1h-1zM14 4h1v1h-1zM8 5h1v1h-1zM9 5h1v1h-1zM10 5h1v1h-1zM11 5h1v1h-1zM12 5h1v1h-1zM13 5h1v1h-1zM14 5h1v1h-1zM7 6h1v1h-1zM14 6h1v1h-1zM8 7h1v1h-1zM13 7h1v1h-1zM9 8h1v1h-1zM10 8h1v1h-1zM11 8h1v1h-1zM12 8h1v1h-1z" fill="#fff"/><path d="M9 11h1v1h-1zM11 11h1v1h-1zM8 12h1v1h-1zM10 13h1v1h-1z" fill="#f0b050"/></svg><svg style="position:absolute;left:40px;top:42px;" width="56" height="52" viewBox="0 0 56 52"><polygon points="18.3,4.8 48.6,18 47.9,38 32,47 5.8,31.8 5.3,14.4" fill="#eca44c"/><polygon points="18.3,4.8 48.6,18 33,26 5.3,14.4" fill="#f8d8a8" opacity="0.4"/></svg><svg style="position:absolute;left:276px;top:48px;" width="40" height="40" viewBox="0 0 40 40"><rect x="7.5" y="3.5" width="24" height="32" rx="2" fill="none" stroke="#cfc8c0" stroke-width="1.6"/><line x1="13" y1="4" x2="13" y2="35" stroke="#cfc8c0" stroke-width="1.3"/><path d="M4 8h7M4 13.5h7M4 19h7M4 25h7M4 30.7h7" stroke="#cfc8c0" stroke-width="1.8"/><path d="M15 9.5l1.3 1.3 2.2-2.5M15 14.5l1.3 1.3 2.2-2.5M15 20l1.3 1.3 2.2-2.5" stroke="#4a90e0" stroke-width="1.2" fill="none"/><path d="M19.5 10.5h8.5M19.5 15.5h8.5M19.5 21h8.5" stroke="#cfc8c0" stroke-width="1.6"/><path d="M20 32l14.5-11" stroke="#5a98e0" stroke-width="2.6" stroke-dasharray="1.5 0.8"/></svg><svg style="position:absolute;left:510px;top:44px;" width="48" height="46" viewBox="0 0 48 46"><path d="M6.5 33V7.5h5l1.5 2.5" fill="none" stroke="#cfc8c0" stroke-width="1.5"/><path d="M8.5 14.5l22-6.5 1.5 4.5" fill="none" stroke="#cfc8c0" stroke-width="1.5"/><path d="M6.5 17.5h29v-5h-4" fill="none" stroke="#cfc8c0" stroke-width="1.5"/><path d="M6.5 33h10.5" fill="none" stroke="#cfc8c0" stroke-width="1.5"/><path d="M19.5 26a11 11 0 1 1 0.5 8.5" fill="none" stroke="#b8b8c0" stroke-width="1.4"/><path d="M21 38a11 11 0 0 0 18.5-4" fill="none" stroke="#6aa0d8" stroke-width="1.3" stroke-dasharray="1.5 1"/><path d="M17 24.5l2.5 2.5 3-1.5" fill="none" stroke="#6aa0d8" stroke-width="1.3"/><path d="M29.5 22.5v8h6" fill="none" stroke="#cfc8c0" stroke-width="1.5"/></svg><svg style="position:absolute;left:1757px;top:46px;" width="36" height="37" viewBox="0 0 36 37"><path d="M21.19 6.25 L17.00 6.14 L16.67 8.96 L15.94 9.18 L15.22 9.46 L14.53 9.80 L14.27 9.96 L12.04 8.20 L9.50 10.74 L11.26 12.97 L10.89 13.64 L10.58 14.35 L10.34 15.07 L10.26 15.37 L7.44 15.70 L7.44 19.30 L10.26 19.63 L10.48 20.36 L10.76 21.08 L11.10 21.77 L11.26 22.03 L9.50 24.26 L12.04 26.80 L14.27 25.04 L14.94 25.41 L15.65 25.72 L16.37 25.96 L16.67 26.04 L17.00 28.86 L21.19 28.75" fill="none" stroke="#e8e4e0" stroke-width="1.4" stroke-linejoin="round"/><path d="M19.5 12a5.5 5.5 0 0 0 0 11" fill="none" stroke="#e8e4e0" stroke-width="1.4"/><path d="M19 13.5h12M19 17.5h12M19 21.5h12" stroke="#90c4f0" stroke-width="1.2"/><circle cx="25" cy="13.5" r="1.6" fill="#22222c" stroke="#90c4f0" stroke-width="1.1"/><circle cx="21.5" cy="17.5" r="1.6" fill="#22222c" stroke="#90c4f0" stroke-width="1.1"/><circle cx="27.5" cy="21.5" r="1.6" fill="#22222c" stroke="#90c4f0" stroke-width="1.1"/></svg><svg style="position:absolute;left:1839px;top:46px;" width="36" height="37" viewBox="0 0 36 37"><circle cx="17.4" cy="17" r="11.3" fill="none" stroke="#f0f0f0" stroke-width="1.5"/><path d="M13.2 14.2a4.3 4.3 0 1 1 6.5 3.6c-1.5 1-2.1 2-2.1 3.8" fill="none" stroke="#90c8f8" stroke-width="1.6"/><circle cx="17.6" cy="25" r="1.1" fill="#90c8f8"/></svg><svg style="position:absolute;left:938px;top:246px;" width="20" height="26" viewBox="0 0 20 26"><path d="M3.5 3.5v16l4-3.5 3 6 2.2-1-3-6h5z" fill="#fff" stroke="#000" stroke-width="1.1" stroke-linejoin="round"/></svg><svg style="position:absolute;left:1585px;top:143px;" width="14" height="16" viewBox="0 0 14 16"><rect x="1.5" y="1.5" width="11" height="13" fill="#fff"/><path d="M5 0.8h4" stroke="#888" stroke-width="1"/><path d="M3 9l2.5 3 4.5-6" fill="none" stroke="#8c1010" stroke-width="1.5"/></svg><svg style="position:absolute;left:1585px;top:180px;" width="34" height="26" viewBox="0 0 34 26"><path d="M4 21.5h14l13-12.5h-14z" fill="#00e8f0" stroke="#000" stroke-width="1.1" stroke-linejoin="round"/><path d="M3 17.5h14l12-12h-14z" fill="#00e8f0" stroke="#000" stroke-width="1.1" stroke-linejoin="round"/><path d="M2 13.5h14l11-11.5h-14z" fill="#00e8f0" stroke="#000" stroke-width="1.1" stroke-linejoin="round"/></svg><svg style="position:absolute;left:1585px;top:224px;" width="36" height="17" viewBox="0 0 36 17"><path d="M2 14.5h9l4-4h-9z" fill="#e8d000" stroke="#000" stroke-width="0.9"/><path d="M11 14.5h9l5-5h-4l2-2h-9l-2 2h4z" fill="#e8d000" stroke="#000" stroke-width="0.9"/><path d="M22 7.5h5l-2 2h3l4-4h-4l2-2h-8l-2 2h4z" fill="#e8d000" stroke="#000" stroke-width="0.9"/></svg><svg style="position:absolute;left:24px;top:1012px;" width="16" height="13" viewBox="0 0 16 13" shape-rendering="crispEdges"><path d="M2 0h3v2h1v3h4v-3h1v-2h3v2h1v3h1v8h-6v-4h-4v4h-6v-8h1v-3h1z" fill="#000"/><path d="M3 5h1v2h-1z M12 5h1v2h-1z M2 10h1v1h-1z M11 10h1v1h-1z" fill="#fff"/></svg><svg style="position:absolute;left:63px;top:1011px;" width="22" height="18" viewBox="0 0 22 18" shape-rendering="crispEdges"><path d="M3 1h10v1h-10z M3 4h10v1h-10z M3 13h10v1h-10z" fill="#b8b8b8"/><path d="M3 7h10v1h-10z M3 10h10v1h-10z" fill="#000"/><path d="M15 1h1v9h-1z M13 3h5v1h-5z M14 2h3v1h-3z" fill="#1a78d8"/></svg><svg style="position:absolute;left:1542px;top:141px;shape-rendering:auto" width="12" height="8" viewBox="0 0 12 8" shape-rendering="crispEdges"><path d="M1.5 1.5h8l-4 4z" fill="#000"/></svg><svg style="position:absolute;left:536px;top:504px;" width="11" height="8" viewBox="0 0 11 8" shape-rendering="crispEdges"><path d="M1 1h8l-4 4z" fill="#000"/></svg><svg style="position:absolute;left:1543px;top:164px;" width="14" height="14" viewBox="0 0 14 14"><path d="M3 9l4-4 4 4" fill="none" stroke="#606060" stroke-width="1.6"/></svg><svg style="position:absolute;left:1543px;top:981px;" width="14" height="14" viewBox="0 0 14 14"><path d="M3 5l4 4 4-4" fill="none" stroke="#606060" stroke-width="1.6"/></svg>
</body></html>
